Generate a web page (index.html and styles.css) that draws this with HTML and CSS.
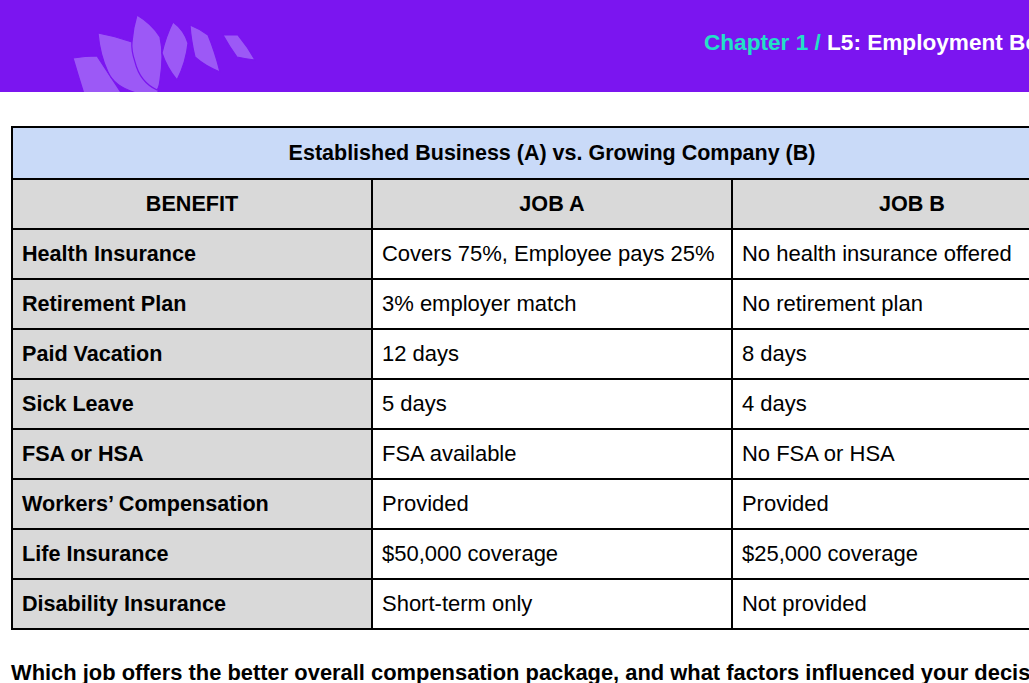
FILE: index.html
```html
<!DOCTYPE html>
<html lang="en">
<head>
<meta charset="utf-8">
<title>Employment Benefits</title>
<link rel="stylesheet" href="styles.css">
</head>
<body>
<header class="topbar">
  <svg class="logo" width="200" height="92" viewBox="0 0 200 92" aria-hidden="true">
    <g fill="#9c59f6" stroke="#7b15f0" stroke-width="1.2" stroke-linejoin="round">
      <path d="M13,58 Q25,56 37,56 L62,94 L24,94 Q18,75 13,58Z"/>
      <path d="M38,33 Q55,36 72,42 Q74,70 98,90 L98,94 L80,94 Q55,88 48,72 Q40,55 38,33Z"/>
      <path d="M77,15 Q92,24 100,37 Q104,55 100,80 Q99,88 97,90 Q80,82 75,62 Q71,50 72,42 Q73,28 77,15Z"/>
      <path d="M113,22 Q124,30 128,43 Q126,62 117,80 Q107,68 102,53 Q106,36 113,22Z"/>
      <path d="M130,25 Q140,29 148,35 Q155,52 160,72 Q145,66 135,57 Q131,40 130,25Z"/>
      <path d="M163,35 Q171,35 178,35 Q188,47 195,60 Q186,59 177,57 Q169,46 163,35Z"/>
    </g>
  </svg>
  <div class="crumb"><span class="chapter">Chapter 1 /</span> L5: Employment Benefits</div>
</header>

<main class="content">
  <table class="compare">
    <tr><th class="title" colspan="3">Established Business (A) vs. Growing Company (B)</th></tr>
    <tr class="head"><th>BENEFIT</th><th>JOB A</th><th>JOB B</th></tr>
    <tr><th class="label">Health Insurance</th><td>Covers 75%, Employee pays 25%</td><td>No health insurance offered</td></tr>
    <tr><th class="label">Retirement Plan</th><td>3% employer match</td><td>No retirement plan</td></tr>
    <tr><th class="label">Paid Vacation</th><td>12 days</td><td>8 days</td></tr>
    <tr><th class="label">Sick Leave</th><td>5 days</td><td>4 days</td></tr>
    <tr><th class="label">FSA or HSA</th><td>FSA available</td><td>No FSA or HSA</td></tr>
    <tr><th class="label">Workers’ Compensation</th><td>Provided</td><td>Provided</td></tr>
    <tr><th class="label">Life Insurance</th><td>$50,000 coverage</td><td>$25,000 coverage</td></tr>
    <tr><th class="label">Disability Insurance</th><td>Short-term only</td><td>Not provided</td></tr>
  </table>
  <p class="question">Which job offers the better overall compensation package, and what factors influenced your decision?</p>
</main>
</body>
</html>
```

FILE: styles.css
```css
html {
  overflow: hidden;
}
body {
  margin: 0;
  font-family: "Liberation Sans", Arial, sans-serif;
  color: #000;
  background: #fff;
}
.topbar {
  height: 92px;
  background: #7b15f0;
  display: flex;
  align-items: center;
  overflow: hidden;
  white-space: nowrap;
}
.logo {
  flex: none;
  margin-left: 60px;
  align-self: stretch;
}
.crumb {
  flex: none;
  margin-left: 444px;
  margin-top: -6px;
  font-size: 22.6px;
  font-weight: bold;
  color: #fff;
}
.chapter {
  color: #22e0c6;
}
.content {
  padding: 34px 0 0 11px;
}
.compare {
  border-collapse: collapse;
  table-layout: fixed;
  width: 1082px;
  font-size: 22px;
}
.compare th,
.compare td {
  border: 2px solid #000;
  height: 48px;
  padding: 0 9px;
  text-align: left;
  vertical-align: middle;
  white-space: nowrap;
  width: 342px;
}
.compare td {
  font-weight: normal;
  background: #fff;
}
.compare th {
  font-size: 21.6px;
}
.compare .title {
  text-align: center;
  background: #c9daf8;
  height: 50px;
  font-size: 21.5px;
}
.compare .head th {
  text-align: center;
  background: #d9d9d9;
}
.compare .label {
  background: #d9d9d9;
}
.question {
  margin: 30px 0 0;
  font-size: 21.9px;
  font-weight: bold;
  white-space: nowrap;
}
```
